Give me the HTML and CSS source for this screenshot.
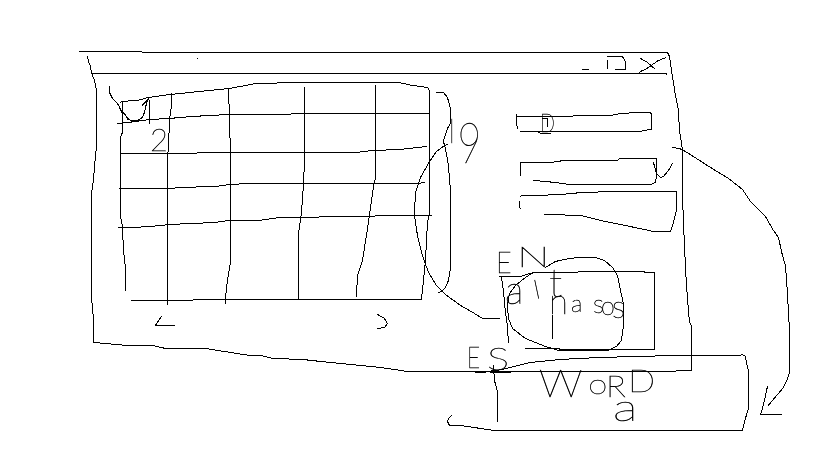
FILE: index.html
```
<!DOCTYPE html>
<html lang="en">
<head>
<meta charset="utf-8">
<title>Window sketch</title>
<link rel="stylesheet" href="styles.css">
</head>
<body>
<svg class="sketch" viewBox="0 0 819 460" width="819" height="460">
  <g class="ink" transform="translate(.45 .45)">
    <!-- window frame -->
    <path d="M79 51H141L142 52H667L669 56 672 76 675 95 678 110 679 130 682 149V195L684 245 686 285 689 322 691 325V370H676L675 371H407L380 367 350 364 320 361 302 359 272 358 260 355H249L230 352 217 350 205 348H165L152 345H126L104 343 93 342V318L91 296V193L93 180 95 155 96 147V90L94 80 91 72 90 66 88 61 87 56"/>
    <path d="M92 73H665L667 74M197 58h.5"/>
    <!-- window controls -->
    <path d="M582 69H589M607 69V60M607 56H622L625 61V69H615M640 58L647 62 655 69M666 57L658 60 645 69 640 71 638 74"/>
    <!-- calendar columns and rows -->
    <path d="M119 103L121 101 137 100 148 97 170 94 229 88 256 83 304 82H398L412 85 427 87 429 90V212L427 223 425 260 422 290 421 299H193L192 300H131"/>
    <path d="M122 101V132L120 137V215L122 226 123 250 125 267V290L126 291M171 93V105L169 120 168 150 167 153V305M228 88L229 115 230 155V262L227 280 225 297V304M304 87V162L303 185 301 213 298 233V299M375 85V178L373 186 369 215 366 235 362 260 357 275 356 297"/>
    <path d="M116 124L117 123 128 122 150 119 169 118 192 116 229 114H290L291 113H429M120 153H196L197 152H359L361 151 375 150 400 149 427 146M119 188H170L181 187 215 186 230 184 250 183H417L425 182M118 227H133L150 226 170 224 215 222 228 220H258L280 217 368 216 384 215H432"/>
    <!-- arrow over the first cell -->
    <path d="M109 86V92L112 98 117 103 121 110 126 116 131 121H136L142 117 144 112 146 103 148 98M118 104L121 112 125 114 127 119 132 120H138L143 115 145 108 147 99M141 106L148 98M149 100V124"/>
    <!-- month navigation -->
    <path d="M161 316L155 325H175M377 314L384 318 387 323 384 327 377 328"/>
    <!-- brace and connector -->
    <path d="M435 93L436 92H443L447 97 450 108V123L447 128 444 137 443 141 445 148 448 165 450 190V268L448 280 445 287 441 291 438 292"/>
    <path d="M448 144L444 145 436 151 428 163 420 177 415 192 414 215 417 235 422 255 428 272 436 285 445 294 460 305 474 313 482 318H500"/>
    <!-- input, select and text area -->
    <path d="M516 114V120L517 129M516 116H572L574 115H611L620 113 640 112H650L651 114V129L643 130 641 131H520M538 132L541 133H551M542 118H547V127"/>
    <path d="M520 176V162H550L564 160H617L619 158H656V176L655 182 651 184H568L563 183 545 181 533 180M653 162L656 173 660 177 663 176 668 170 672 163"/>
    <path d="M520 209L519 206V201M519 197L521 195H537L561 194 582 192 618 191H676V210L673 222 670 231H653L620 224 600 220 580 215 544 214"/>
    <!-- first language box, its circle and inner divider -->
    <path d="M499 276H520L533 272H577L579 271H643L645 272H654V349H560L558 348H525M501 277L503 290 505 312 507 325 508 343M552 315V339"/>
    <path d="M545 267L555 261 569 258 580 257H595L604 260 612 267 617 275 620 290 623 303V325L621 340 616 346 608 350H558L545 346 525 338 512 328 508 318 507 305 509 293 515 285 525 277 533 272H540"/>
    <!-- second language box -->
    <path d="M491 370H497L510 367 530 362 560 359 600 357 676 355H740L742 354 745 356 746 362 748 370V408L745 418 742 430H493L480 428 460 425H449L447 421 448 418 451 415M493 365L494 380 497 391V421L498 422M475 372H486M490 372H511"/>
    <!-- pointer to the second box -->
    <path d="M672 147L679 148 685 151 710 167 728 178 742 189 750 201 765 216 773 230 778 237 782 255 785 265 787 293 789 330V372L786 381 783 387 767 406M767 386L764 400 762 408 760 414H782"/>
  </g>
  <g class="note">
    <text x="150" y="151" font-size="31">2</text>
    <text transform="scale(.75 1)"><tspan x="599" y="143" font-size="33">l</tspan><tspan x="610" y="162" font-size="55">9</tspan></text>
    <text transform="translate(540 132) scale(.75 1)" font-size="26">D</text>
    <text transform="translate(496 273) scale(.9 1)" font-size="30">E</text>
    <text transform="translate(517 267) scale(1.55 1)" font-size="28">N</text>
    <text><tspan x="505" y="304" font-size="39">a</tspan><tspan x="536" y="299" font-size="26" rotate="-12">l</tspan><tspan x="549" y="297" font-size="40">t</tspan></text>
    <text><tspan x="549" y="314" font-size="35">n</tspan><tspan x="571" y="312" font-size="24">a</tspan><tspan x="593" y="313" font-size="26">s</tspan><tspan x="601" y="315" font-size="25">o</tspan><tspan x="612" y="318" font-size="31">s</tspan></text>
    <text transform="translate(467 368) scale(.78 1)" font-size="29">E</text>
    <text transform="translate(487 370) scale(1.35 1)" font-size="31">S</text>
    <text transform="scale(1.15 1)"><tspan x="468.5" y="397" font-size="38">W</tspan><tspan x="512" y="394" font-size="20">O</tspan><tspan x="527" y="397" font-size="29">R</tspan><tspan x="546" y="392" font-size="31">D</tspan></text>
    <text transform="translate(613 421) scale(1.4 1)" font-size="37">a</text>
  </g>
</svg>
</body>
</html>
```
FILE: styles.css
```
body {
  margin: 0;
  background: #fff;
  overflow: hidden;
}
.sketch {
  display: block;
}
.ink {
  fill: none;
  stroke: #000;
  stroke-width: 1;
  shape-rendering: crispEdges;
}
.note {
  fill: #000;
  stroke: #000;
  stroke-width: .45;
  opacity: .99;
  font-family: Lato, "Open Sans", sans-serif;
  font-weight: 100;
}
```
